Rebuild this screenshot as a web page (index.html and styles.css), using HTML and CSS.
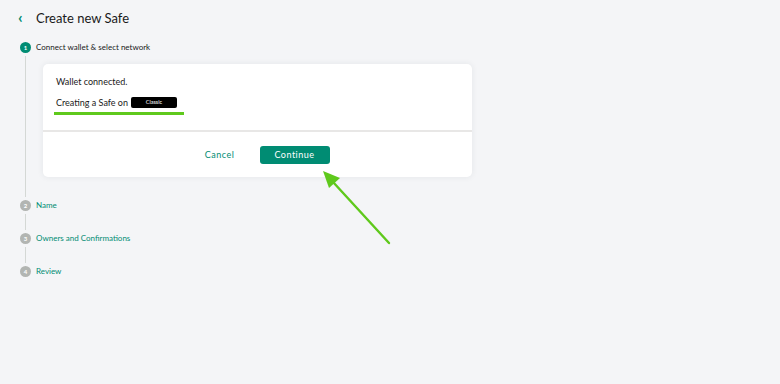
FILE: index.html
```html
<!DOCTYPE html>
<html lang="en">
<head>
    <meta charset="UTF-8">
    <title>Create new Safe</title>
    <link rel="stylesheet" href="styles.css">
</head>
<body>
    <div class="page">
        <div class="header">
            <span class="back">&lsaquo;</span>
            <h1>Create new Safe</h1>
        </div>

        <div class="stepper">
            <div class="step first">
                <div class="rail">
                    <div class="dot active">1</div>
                    <div class="line"></div>
                </div>
                <div class="body">
                    <div class="label current">Connect wallet &amp; select network</div>
                    <div class="card">
                        <div class="card-top">
                            <p class="connected">Wallet connected.</p>
                            <div class="network-row">
                                Creating a Safe on <span class="network">Classic</span>
                            </div>
                            <div class="highlight"></div>
                        </div>
                        <div class="card-actions">
                            <button class="btn-cancel">Cancel</button>
                            <button class="btn-continue">Continue</button>
                        </div>
                    </div>
                </div>
            </div>
            <div class="step">
                <div class="rail">
                    <div class="dot">2</div>
                    <div class="line"></div>
                </div>
                <div class="body">
                    <div class="label">Name</div>
                </div>
            </div>
            <div class="step">
                <div class="rail">
                    <div class="dot">3</div>
                    <div class="line"></div>
                </div>
                <div class="body">
                    <div class="label">Owners and Confirmations</div>
                </div>
            </div>
            <div class="step last">
                <div class="rail">
                    <div class="dot">4</div>
                </div>
                <div class="body">
                    <div class="label">Review</div>
                </div>
            </div>
        </div>

        <!-- annotation arrow pointing at Continue -->
        <svg class="arrow" width="80" height="85" viewBox="0 0 80 85">
            <path d="M71 77 L15 16" stroke="#5fc91c" stroke-width="2.4" stroke-linecap="round"/>
            <polygon points="5,5 22,12 11,22" fill="#5fc91c"/>
        </svg>
    </div>
</body>
</html>
```

FILE: styles.css
```css
body {
    margin: 0;
    background-color: #f4f5f7;
    font-family: 'Lato', 'Noto Sans', sans-serif;
    color: #1a1a1a;
}
.page {
    position: relative;
    width: 780px;
    height: 384px;
}
.header {
    display: flex;
    align-items: center;
    height: 36px;
    padding-left: 18px;
}
.back {
    color: #008c73;
    font-size: 16px;
    font-weight: bold;
    width: 18px;
    margin-top: -3px;
}
h1 {
    margin: 0;
    font-size: 13px;
    font-weight: 400;
    color: #1a1a1a;
}
.stepper {
    padding-left: 20px;
    padding-top: 6px;
}
.step {
    display: flex;
    gap: 5px;
}
.rail {
    display: flex;
    flex-direction: column;
    align-items: center;
    width: 11px;
}
.dot {
    width: 11px;
    height: 11px;
    border-radius: 50%;
    background-color: #b2b5b2;
    color: #fff;
    font-size: 6px;
    font-weight: bold;
    display: flex;
    align-items: center;
    justify-content: center;
    flex-shrink: 0;
}
.dot.active {
    background-color: #008c73;
}
.line {
    flex: 1;
    width: 1px;
    background-color: #d4d8d5;
    margin: 3px 0;
}
.body {
    flex: 1;
    padding-bottom: 22px;
}
.step.first .body {
    padding-bottom: 23px;
}
.step.last .body {
    padding-bottom: 0;
}
.label {
    font-size: 8px;
    line-height: 11px;
    color: #008c73;
}
.label.current {
    color: #1a1a1a;
}
.card {
    width: 429px;
    margin: 11px 0 0 7px;
    background-color: #fff;
    border-radius: 5px;
    box-shadow: 0 0 6px rgba(40, 54, 61, 0.08);
}
.card-top {
    height: 68px;
    padding: 12px 13px 0;
    box-sizing: border-box;
    border-bottom: 2px solid #e8e7e6;
}
.connected {
    margin: 0;
    font-size: 9px;
    line-height: 12px;
}
.network-row {
    margin-top: 8px;
    font-size: 9px;
    display: flex;
    align-items: center;
    gap: 3px;
    height: 12px;
}
.network {
    display: inline-block;
    background-color: #000;
    color: #fff;
    font-size: 5.5px;
    width: 46px;
    height: 11px;
    line-height: 11px;
    text-align: center;
    border-radius: 2px;
}
.highlight {
    width: 130px;
    height: 3px;
    background-color: #5fc91c;
    margin: 4px 0 0 -2px;
}
.card-actions {
    display: flex;
    justify-content: center;
    align-items: center;
    gap: 10px;
    height: 45px;
    padding-left: 4px;
}
button {
    font-family: 'Lato', 'Noto Sans', sans-serif;
    font-size: 9px;
    font-weight: 400;
    letter-spacing: 0.5px;
    border: none;
    cursor: pointer;
}
.btn-cancel {
    background: none;
    color: #008c73;
    width: 60px;
    height: 18px;
}
.btn-continue {
    background-color: #008c73;
    color: #fff;
    width: 70px;
    height: 18px;
    border-radius: 3px;
}
.arrow {
    position: absolute;
    left: 318px;
    top: 166px;
}
```
